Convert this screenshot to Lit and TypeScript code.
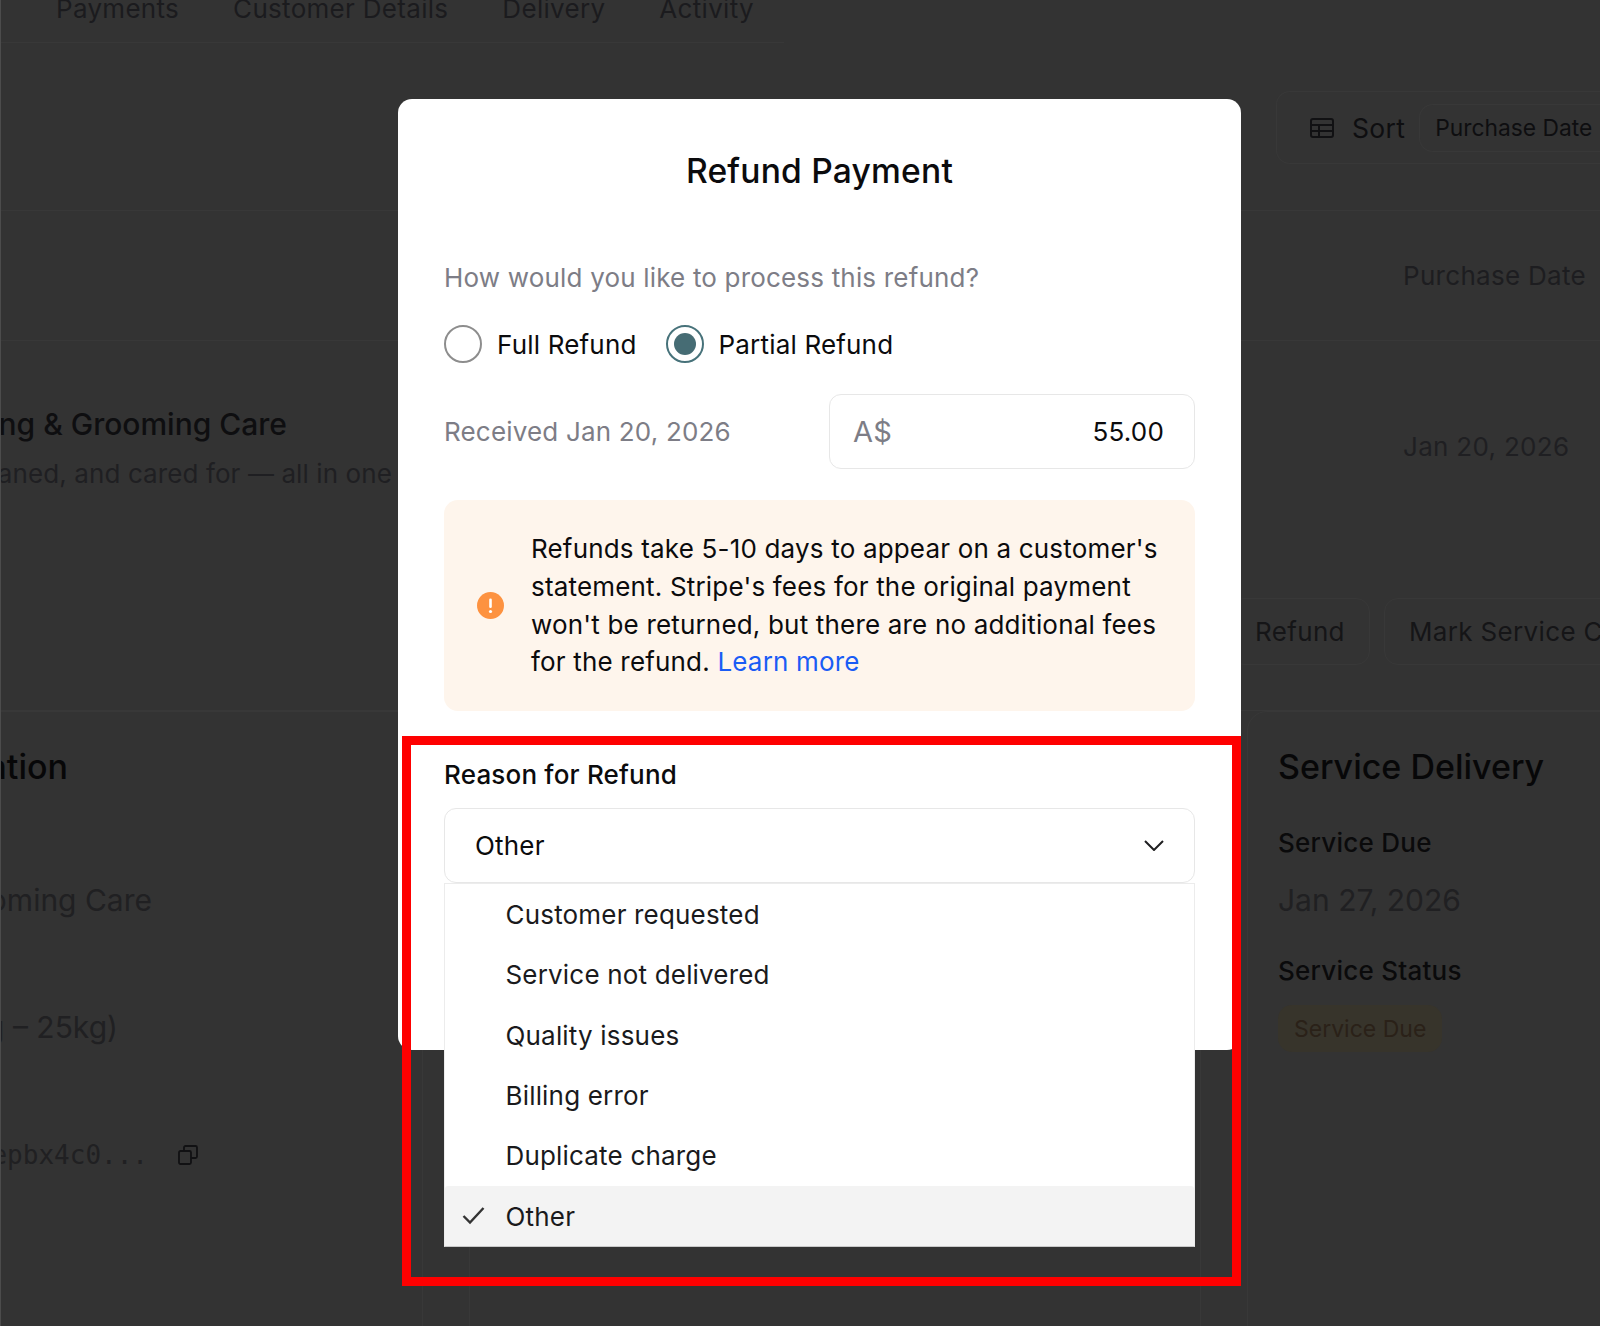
import { LitElement, html, css } from "lit";
import { customElement } from "lit/decorators.js";

const REASONS = [
  "Customer requested",
  "Service not delivered",
  "Quality issues",
  "Billing error",
  "Duplicate charge",
  "Other",
];

@customElement("app-root")
export class AppRoot extends LitElement {
  static styles = css`
    :host {
      display: block;
      font-family: Inter, "Liberation Sans", sans-serif;
    }
    * {
      box-sizing: border-box;
    }
    .page {
      position: relative;
      width: 1600px;
      height: 1326px;
      overflow: hidden;
      background: #333;
      color: #0e0e10;
      border-left: 1px solid #4c4c4c;
      white-space: nowrap;
    }

    /* page behind the backdrop */
    .tabs {
      display: flex;
      gap: 54px;
      height: 43px;
      width: 783px;
      padding-left: 55px;
      border-bottom: 1px solid #383838;
      font-size: 26px;
      line-height: 36px;
      letter-spacing: 0.3px;
      color: #1b1b1e;
    }
    .tabs span {
      margin-top: -9px;
    }
    .toolbar {
      height: 168px;
      padding-top: 48px;
      border-bottom: 1px solid #383838;
      display: flex;
      justify-content: flex-end;
    }
    .sort {
      display: flex;
      align-items: center;
      width: 325px;
      height: 73px;
      padding: 0 0 0 33px;
      flex: none;
      margin-right: -1px;
      border: 1px solid #383838;
      border-right: 0;
      border-radius: 14px 0 0 14px;
      font-size: 26.5px;
      letter-spacing: 0.3px;
    }
    .sort svg {
      margin-right: 18px;
    }
    .pill {
      margin-left: 14px;
      height: 48px;
      padding-left: 15px;
      flex: 1;
      display: flex;
      align-items: center;
      border: 1px solid #383838;
      border-right: 0;
      border-radius: 14px 0 0 14px;
      font-size: 22.8px;
      letter-spacing: 0;
      overflow: hidden;
    }
    .table-head {
      height: 130px;
      padding: 47px 0 0 1402px;
      border-bottom: 1px solid #383838;
      font-size: 26px;
      line-height: 36px;
      letter-spacing: 0.3px;
      color: #1d1d20;
    }
    .table-row {
      height: 370px;
      border-bottom: 1px solid #383838;
    }
    .row-top {
      display: flex;
      justify-content: space-between;
      height: 257px;
    }
    .clip {
      display: flex;
      justify-content: flex-end;
    }
    .row-title {
      width: 286px;
      margin-top: 63px;
      font-size: 30px;
      line-height: 40px;
      font-weight: 450;
      color: #0e0e10;
    }
    .row-sub {
      width: 391px;
      margin-top: 12px;
      font-size: 26px;
      line-height: 36px;
      letter-spacing: 0.1px;
      color: #1f1f22;
    }
    .row-date {
      width: 197px;
      padding-top: 88px;
      font-size: 26px;
      line-height: 36px;
      letter-spacing: 0.3px;
      color: #1f1f22;
    }
    .row-actions {
      display: flex;
      gap: 14px;
      padding-left: 1229px;
    }
    .action {
      flex: none;
      height: 67px;
      padding: 0 24px;
      display: flex;
      align-items: center;
      border: 1px solid #383838;
      border-radius: 14px;
      font-size: 26px;
      letter-spacing: 0.35px;
      color: #151517;
    }
    .cards {
      display: flex;
      height: 616px;
    }
    .card {
      flex: none;
      border: 1px solid #383838;
      border-radius: 20px 20px 0 0;
    }
    .card-left {
      width: 452px;
      margin-left: -30px;
      margin-right: 46px;
      padding-left: 30px;
      border-left: 0;
    }
    .card-middle {
      width: 732px;
      margin-right: 46px;
    }
    .card-right {
      width: 400px;
      padding: 35px 0 0 30px;
    }
    .card-title {
      font-size: 34px;
      line-height: 40px;
      font-weight: 450;
      color: #070708;
    }
    .left-col .card-title {
      width: 67px;
      margin-top: 35px;
    }
    .field-label {
      margin-top: 38px;
      font-size: 26px;
      line-height: 36px;
      font-weight: 450;
      letter-spacing: 0.25px;
      color: #0a0a0b;
    }
    .field-value {
      margin-top: 21px;
      font-size: 30px;
      line-height: 36px;
      color: #202022;
    }
    .field-label.second {
      margin-top: 35px;
    }
    .badge {
      display: inline-flex;
      align-items: center;
      height: 47px;
      margin-top: 16px;
      padding: 0 16px;
      border-radius: 14px;
      background: #37342b;
      font-size: 23px;
      color: #2a2118;
    }
    .left-value {
      font-size: 30px;
      line-height: 36px;
      color: #202022;
    }
    .left-care {
      width: 151px;
      margin-top: 95px;
    }
    .left-weight {
      width: 117px;
      margin-top: 91px;
    }
    .left-id {
      margin-top: 95px;
      align-items: center;
      gap: 30px;
      width: 197px;
      font-family: "DejaVu Sans Mono", "Liberation Mono", monospace;
      font-size: 26px;
      color: #202022;
    }
    .left-id svg {
      flex: none;
    }

    /* backdrop layer holding the dialog */
    .dialog {
      position: absolute;
      left: 397px;
      top: 99px;
      width: 843px;
      height: 951px;
      padding: 52px 46px 0;
      background: #fff;
      border-radius: 14px;
      color: #0b0b0d;
      font-size: 26px;
      letter-spacing: 0.18px;
    }
    .title {
      text-align: center;
      font-size: 33.6px;
      line-height: 40px;
      font-weight: 500;
      letter-spacing: 0.2px;
    }
    .question {
      margin-top: 69px;
      line-height: 36px;
      color: #7d7d86;
    }
    .radios {
      display: flex;
      align-items: center;
      margin-top: 29px;
      height: 38px;
    }
    .radio {
      flex: none;
      width: 38px;
      height: 38px;
      margin-right: 15px;
      padding: 6px;
      border: 2px solid #8d8d8d;
      border-radius: 50%;
    }
    .radio.on {
      margin-left: 29px;
      border-color: #47727a;
    }
    .radio.on::after {
      content: "";
      display: block;
      width: 100%;
      height: 100%;
      border-radius: 50%;
      background: #466c74;
    }
    .amount-row {
      display: flex;
      align-items: center;
      justify-content: space-between;
      margin-top: 31px;
      color: #7d7d86;
    }
    .amount {
      display: flex;
      align-items: center;
      justify-content: space-between;
      width: 366px;
      height: 75px;
      padding: 0 30px 0 23px;
      border: 1px solid #e7e7e7;
      border-radius: 12px;
    }
    .amount .currency {
      font-size: 29px;
    }
    .amount .value {
      color: #0b0b0d;
    }
    .alert {
      display: flex;
      align-items: center;
      gap: 27px;
      height: 211px;
      margin-top: 31px;
      padding-left: 33px;
      background: #fef5ec;
      border-radius: 14px;
      line-height: 37.6px;
    }
    .alert svg {
      flex: none;
    }
    .alert a {
      color: #1a5cf5;
      text-decoration: none;
    }
    .reason-label {
      margin-top: 47px;
      line-height: 34px;
      font-weight: 500;
    }
    .select-wrap {
      position: relative;
      margin-top: 16px;
    }
    .select {
      display: flex;
      align-items: center;
      justify-content: space-between;
      height: 75px;
      padding: 0 30px;
      border: 1px solid #e7e7e7;
      border-radius: 12px;
    }
    .menu {
      position: absolute;
      left: 0;
      right: 0;
      top: 100%;
      height: 364px;
      padding-top: 0.5px;
      background: #fff;
      border: 1px solid #ececec;
      border-bottom: 1px solid #c8c8c8;
    }
    .item {
      display: flex;
      align-items: center;
      height: 60.3px;
      padding-left: 60.5px;
      color: #1a1a1c;
    }
    .item.selected {
      position: relative;
      height: 60.5px;
      background: #f3f3f3;
      border-radius: 3px 3px 0 0;
    }
    .item svg {
      position: absolute;
      left: 17px;
      top: 20px;
    }

    /* annotation drawn over the screenshot */
    .highlight {
      position: absolute;
      left: 401px;
      top: 736px;
      width: 839px;
      height: 550px;
      border: 9.5px solid #fe0000;
    }
  `;

  render() {
    return html`
      <div class="page">
        <div class="tabs">
          <span>Payments</span><span>Customer Details</span><span>Delivery</span
          ><span>Activity</span>
        </div>
        <div class="toolbar">
          <div class="sort">
            <svg width="24" height="20" viewBox="0 0 24 20" fill="none" stroke="#111113" stroke-width="2">
              <rect x="1" y="1" width="22" height="18" rx="2" />
              <path d="M1 7h22M1 13h22M9 7v12" />
            </svg>
            Sort
            <div class="pill">Purchase Date</div>
          </div>
        </div>
        <div class="table-head">Purchase Date</div>
        <div class="table-row">
          <div class="row-top">
            <div>
              <div class="clip row-title"><span>Bathing &amp; Grooming Care</span></div>
              <div class="clip row-sub"><span>Washed, cleaned, and cared for — all in one</span></div>
            </div>
            <div class="row-date">Jan 20, 2026</div>
          </div>
          <div class="row-actions">
            <div class="action">Refund</div>
            <div class="action">Mark Service Complete</div>
          </div>
        </div>
        <div class="cards">
          <div class="card card-left left-col">
            <div class="clip card-title"><span>Service Information</span></div>
            <div class="clip left-value left-care"><span>Bathing &amp; Grooming Care</span></div>
            <div class="clip left-value left-weight"><span>Medium (10kg – 25kg)</span></div>
            <div class="clip left-id">
              <span>pi_3epbx4c0...</span>
              <svg width="20" height="20" viewBox="0 0 20 20" fill="none" stroke="#111113" stroke-width="1.8">
                <rect x="1" y="6" width="12" height="13" rx="1.5" />
                <path d="M6 6V2.500A1.500 1.500 0 0 1 7.500 1h10A1.500 1.500 0 0 1 19 2.500v9a1.500 1.500 0 0 1-1.500 1.500H13" />
              </svg>
            </div>
          </div>
          <div class="card card-middle"></div>
          <div class="card card-right">
            <div class="card-title">Service Delivery</div>
            <div class="field-label">Service Due</div>
            <div class="field-value">Jan 27, 2026</div>
            <div class="field-label second">Service Status</div>
            <div class="badge">Service Due</div>
          </div>
        </div>

        <div class="dialog">
          <div class="title">Refund Payment</div>
          <div class="question">How would you like to process this refund?</div>
          <div class="radios">
            <span class="radio"></span>
            <span>Full Refund</span>
            <span class="radio on"></span>
            <span>Partial Refund</span>
          </div>
          <div class="amount-row">
            <span>Received Jan 20, 2026</span>
            <div class="amount">
              <span class="currency">A$</span>
              <span class="value">55.00</span>
            </div>
          </div>
          <div class="alert">
            <svg width="27" height="27" viewBox="0 0 27 27">
              <circle cx="13.500" cy="13.500" r="13.500" fill="#fd9240" />
              <rect x="12.200" y="6.500" width="2.600" height="9.500" rx="1.300" fill="#fff" />
              <circle cx="13.500" cy="19.500" r="1.600" fill="#fff" />
            </svg>
            <div>
              Refunds take 5-10 days to appear on a customer's<br />
              statement. Stripe's fees for the original payment<br />
              won't be returned, but there are no additional fees<br />
              for the refund. <a href="#">Learn more</a>
            </div>
          </div>
          <div class="reason-label">Reason for Refund</div>
          <div class="select-wrap">
            <div class="select">
              <span>Other</span>
              <svg width="20" height="11" viewBox="0 0 20 11" fill="none" stroke="#1f1f21" stroke-width="2">
                <path d="M1 1l9 9 9-9" />
              </svg>
            </div>
            <div class="menu">
              ${REASONS.map(
                (reason) => html`
                  <div class="item ${reason === "Other" ? "selected" : ""}">
                    ${reason === "Other"
                      ? html`<svg width="23" height="19" viewBox="0 0 23 19" fill="none" stroke="#333" stroke-width="2.400">
                          <path d="M1.500 10l6.500 6.500L21.500 2" />
                        </svg>`
                      : ""}
                    ${reason}
                  </div>
                `,
              )}
            </div>
          </div>
        </div>
        <div class="highlight"></div>
      </div>
    `;
  }
}
